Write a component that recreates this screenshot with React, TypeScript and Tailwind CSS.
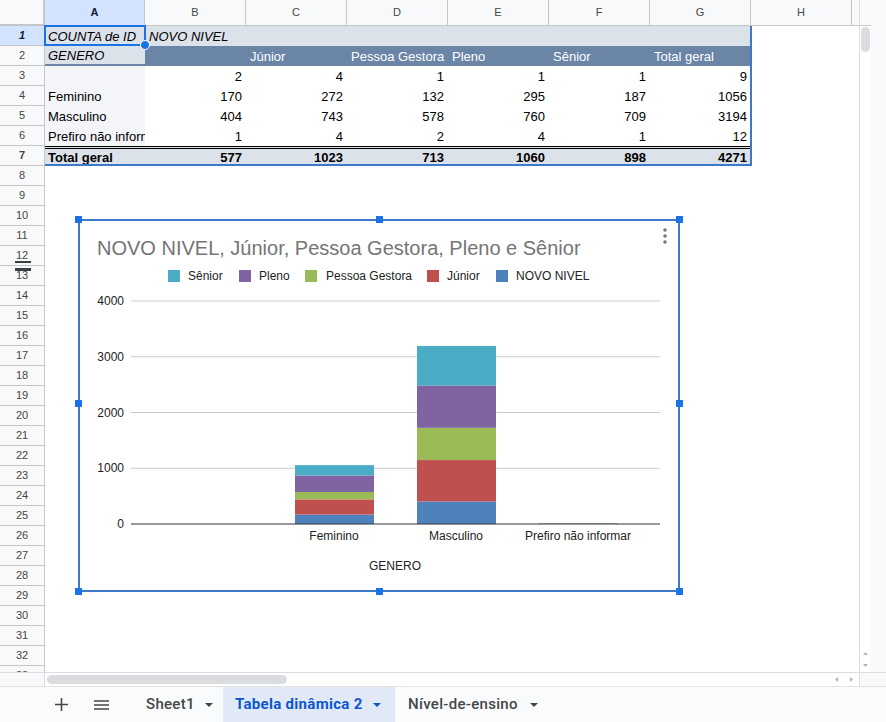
import React from "react";

const series = [
  { name: "NOVO NIVEL", color: "#4f81bd" },
  { name: "Júnior", color: "#c0504d" },
  { name: "Pessoa Gestora", color: "#9bbb59" },
  { name: "Pleno", color: "#8064a2" },
  { name: "Sênior", color: "#4bacc6" },
];

const legend = [
  { name: "Sênior", color: "#4bacc6", sq: 168, tx: 188 },
  { name: "Pleno", color: "#8064a2", sq: 239, tx: 259 },
  { name: "Pessoa Gestora", color: "#9bbb59", sq: 305, tx: 326 },
  { name: "Júnior", color: "#c0504d", sq: 427, tx: 447 },
  { name: "NOVO NIVEL", color: "#4f81bd", sq: 496, tx: 516 },
];

const bars = [
  { x: 295, vals: [170, 272, 132, 295, 187] },
  { x: 417, vals: [404, 743, 578, 760, 709] },
  { x: 539, vals: [1, 4, 2, 4, 1] },
];

const body = [
  ["", 2, 4, 1, 1, 1, 9],
  ["Feminino", 170, 272, 132, 295, 187, 1056],
  ["Masculino", 404, 743, 578, 760, 709, 3194],
  ["Prefiro não informar", 1, 4, 2, 4, 1, 12],
];
const totals = [577, 1023, 713, 1060, 898, 4271];
const levels = ["", "Júnior", "Pessoa Gestora", "Pleno", "Sênior", "Total geral"];
const letters = ["A", "B", "C", "D", "E", "F", "G", "H"];

const Y0 = 524;
const K = 0.05575;

function RowHead({ n, active }: { n: number; active?: boolean }) {
  return (
    <div
      className={
        "w-[45px] shrink-0 h-full border-r border-b border-[#c4c7c5] text-center text-[11px] leading-[19px] " +
        (active ? "bg-[#d3e3fd] font-bold text-[#0b1d3a]" : "bg-[#f8f9fa] text-[#444746]")
      }
    >
      {n}
    </div>
  );
}

function Chart() {
  return (
    <div className="absolute left-[78px] top-[219px] w-[602px] h-[373px] border-2 border-[#3d78c9] bg-white">
      <svg
        className="absolute -left-[2px] -top-[2px]"
        width={602}
        height={373}
        viewBox="78 219 602 373"
      >
        <text x={97} y={255} fontSize={20} fill="#757575">
          NOVO NIVEL, Júnior, Pessoa Gestora, Pleno e Sênior
        </text>
        <circle cx={665} cy={230} r={1.8} fill="#757575" />
        <circle cx={665} cy={236} r={1.8} fill="#757575" />
        <circle cx={665} cy={242} r={1.8} fill="#757575" />

        {legend.map((l) => (
          <g key={l.name}>
            <rect x={l.sq} y={270} width={12} height={12} fill={l.color} />
            <text x={l.tx} y={280} fontSize={12} fill="#222">
              {l.name}
            </text>
          </g>
        ))}

        {[1, 2, 3, 4].map((i) => (
          <line
            key={i}
            x1={131}
            x2={660}
            y1={Y0 - i * 1000 * K}
            y2={Y0 - i * 1000 * K}
            stroke="#cccccc"
            strokeWidth={1}
          />
        ))}
        {[0, 1, 2, 3, 4].map((i) => (
          <text key={i} x={124} y={Y0 - i * 1000 * K + 4} fontSize={12} fill="#222" textAnchor="end">
            {i * 1000}
          </text>
        ))}

        {bars.map((b) => {
          let cum = 0;
          return (
            <g key={b.x}>
              {b.vals.map((v, i) => {
                const h = v * K;
                const y = Y0 - cum * K - h;
                cum += v;
                return <rect key={i} x={b.x} y={y} width={79} height={h} fill={series[i].color} />;
              })}
            </g>
          );
        })}

        <line x1={131} x2={660} y1={Y0} y2={Y0} stroke="#333" strokeWidth={1} />

        <text x={334} y={540} fontSize={12} fill="#222" textAnchor="middle">Feminino</text>
        <text x={456} y={540} fontSize={12} fill="#222" textAnchor="middle">Masculino</text>
        <text x={578} y={540} fontSize={12} fill="#222" textAnchor="middle">Prefiro não informar</text>
        <text x={395} y={570} fontSize={12} fill="#222" textAnchor="middle">GENERO</text>
      </svg>
      {[
        "-left-[5px] -top-[5px]",
        "left-[296px] -top-[5px]",
        "-right-[5px] -top-[5px]",
        "-left-[5px] top-[179px]",
        "-right-[5px] top-[179px]",
        "-left-[5px] -bottom-[5px]",
        "left-[296px] -bottom-[5px]",
        "-right-[5px] -bottom-[5px]",
      ].map((p) => (
        <span key={p} className={"absolute w-[7px] h-[7px] bg-[#1a73e8] " + p} />
      ))}
    </div>
  );
}

function Caret({ color = "#444746" }: { color?: string }) {
  return (
    <svg width="8" height="4" viewBox="0 0 8 4">
      <path d="M0 0 L8 0 L4 4 Z" fill={color} />
    </svg>
  );
}

export default function App() {
  const emptyRows = Array.from({ length: 26 }, (_, i) => i + 8);
  return (
    <div className="w-[886px] h-[722px] overflow-hidden bg-white flex flex-col font-['Liberation_Sans',Arial,sans-serif] text-black">
      <div className="flex h-[672px]">
        <div className="relative w-[859px] h-full overflow-hidden">
          {/* column headers */}
          <div className="flex h-[26px]">
            <div className="w-[45px] shrink-0 bg-[#f8f9fa] border-r-2 border-b-2 border-[#c4c7c5]" />
            {letters.map((l, i) => (
              <div
                key={l}
                className={
                  (i === 0 ? "w-[100px] bg-[#d3e3fd] font-bold text-[#0b1d3a] " : "w-[101px] bg-[#f8f9fa] text-[#444746] ") +
                  "shrink-0 border-r border-b border-[#c4c7c5] text-center text-[11px] leading-[25px]"
                }
              >
                {l}
              </div>
            ))}
            <div className="flex-1 bg-[#f8f9fa] border-b border-[#c4c7c5]" />
          </div>

          {/* row 1 */}
          <div className="flex h-[20px] text-[13px] leading-[21px] italic">
            <RowHead n={1} active />
            <div className="w-[100px] shrink-0 bg-[#dce2ea] px-[3px] whitespace-nowrap overflow-hidden">COUNTA de ID</div>
            <div className="w-[606px] shrink-0 bg-[#dce2ea] px-[4px]">NOVO NIVEL</div>
          </div>

          {/* row 2 */}
          <div className="flex h-[20px] text-[13px]">
            <RowHead n={2} />
            <div className="w-[100px] shrink-0 bg-[#dce2ea] border-b-2 border-[#6b85a7] px-[3px] italic leading-[20px] overflow-hidden">GENERO</div>
            {levels.map((lv, i) => (
              <div key={i} className="w-[101px] shrink-0 bg-[#6b85a7] text-white px-[4px] leading-[21px] whitespace-nowrap">
                {lv}
              </div>
            ))}
          </div>

          {/* rows 3-6 */}
          {body.map((r, ri) => (
            <div key={ri} className="flex h-[20px] text-[13px] leading-[21px]">
              <RowHead n={ri + 3} />
              <div className="w-[100px] shrink-0 bg-[#f3f5f8] px-[3px] whitespace-nowrap overflow-hidden">{r[0]}</div>
              {r.slice(1).map((v, i) => (
                <div key={i} className="w-[101px] shrink-0 text-right pr-[4px]">
                  {v}
                </div>
              ))}
            </div>
          ))}

          {/* row 7 */}
          <div className="flex h-[20px] text-[13px] leading-[17px] font-bold">
            <RowHead n={7} />
            <div className="w-[100px] shrink-0 bg-[#dce2ea] border-t-[3px] border-double border-black px-[3px]">Total geral</div>
            {totals.map((v, i) => (
              <div key={i} className="w-[101px] shrink-0 bg-[#dce2ea] border-t-[3px] border-double border-black text-right pr-[4px]">
                {v}
              </div>
            ))}
          </div>

          {emptyRows.map((n) => (
            <div key={n} className="flex h-[20px]">
              <RowHead n={n} />
            </div>
          ))}

          {/* pivot range outline */}
          <div className="absolute left-[45px] top-[26px] w-[707px] h-[140px] border-r-2 border-b-2 border-[#3d78c9] pointer-events-none" />
          {/* active cell A1 */}
          <div className="absolute left-[44px] top-[25px] w-[102px] h-[21px] border-2 border-[#1a73e8]" />
          <div className="absolute left-[140px] top-[40px] w-[10px] h-[10px] rounded-full bg-[#1a73e8] border border-white" />

          {/* row resize handle */}
          <div className="absolute left-[15px] top-[261px] w-[16px] h-[2px] bg-[#3c4043]" />
          <div className="absolute left-[15px] top-[268px] w-[16px] h-[3px] bg-[#3c4043]" />

          <Chart />
        </div>

        {/* vertical scrollbar */}
        <div className="w-[12px] h-full flex flex-col border-l border-[#dadce0]">
          <div className="h-[26px] bg-[#f8f9fa] border-b border-[#c4c7c5]" />
          <div className="mx-[1px] mt-[1px] h-[25px] w-[9px] rounded-[5px] bg-[#dadce0]" />
          <div className="flex-1" />
          <div className="flex flex-col items-center gap-[9px] pb-[5px]">
            <svg width="5" height="3" viewBox="0 0 5 3"><path d="M0 3 L5 3 L2.5 0 Z" fill="#b0b4b8" /></svg>
            <svg width="5" height="3" viewBox="0 0 5 3"><path d="M0 0 L5 0 L2.5 3 Z" fill="#b0b4b8" /></svg>
          </div>
        </div>
        <div className="flex-1 h-full bg-[#f8f9fa]" />
      </div>

      {/* horizontal scrollbar */}
      <div className="flex h-[14px] border-t border-[#dadce0]">
        <div className="w-[45px] bg-[#f8f9fa] border-r border-[#dadce0]" />
        <div className="w-[784px] flex items-center pl-[2px]">
          <div className="w-[240px] h-[9px] rounded-[5px] bg-[#dadce0]" />
        </div>
        <div className="w-[30px] flex items-center justify-around">
          <svg width="3" height="5" viewBox="0 0 3 5"><path d="M3 0 L3 5 L0 2.5 Z" fill="#b0b4b8" /></svg>
          <svg width="3" height="5" viewBox="0 0 3 5"><path d="M0 0 L0 5 L3 2.5 Z" fill="#b0b4b8" /></svg>
        </div>
        <div className="flex-1 bg-[#f8f9fa] border-l border-[#dadce0]" />
      </div>

      {/* sheet tabs */}
      <div className="flex items-stretch h-[36px] bg-[#f9fbfd] border-t border-[#e1e3e1] font-['Roboto',sans-serif] text-[15px] tracking-[0.3px] font-medium text-[#444746]">
        <div className="w-[46px]" />
        <div className="w-[30px] flex items-center justify-center">
          <svg width="13" height="13" viewBox="0 0 13 13">
            <path d="M6.5 0 V13 M0 6.5 H13" stroke="#444746" strokeWidth="1.6" />
          </svg>
        </div>
        <div className="w-[10px]" />
        <div className="w-[30px] flex items-center justify-center">
          <svg width="15" height="10" viewBox="0 0 15 10">
            <path d="M0 1 H15 M0 5 H15 M0 9 H15" stroke="#444746" strokeWidth="1.6" />
          </svg>
        </div>
        <div className="w-[17px]" />
        <div className="w-[90px] flex items-center pl-[13px] gap-[10px]">
          <span>Sheet1</span>
          <Caret />
        </div>
        <div className="w-[172px] flex items-center pl-[12px] gap-[10px] bg-[#e1e9f7] text-[#0b57d0] font-bold">
          <span>Tabela dinâmica 2</span>
          <Caret color="#0b57d0" />
        </div>
        <div className="flex items-center pl-[13px] gap-[12px]">
          <span>Nível-de-ensino</span>
          <Caret />
        </div>
      </div>
    </div>
  );
}
